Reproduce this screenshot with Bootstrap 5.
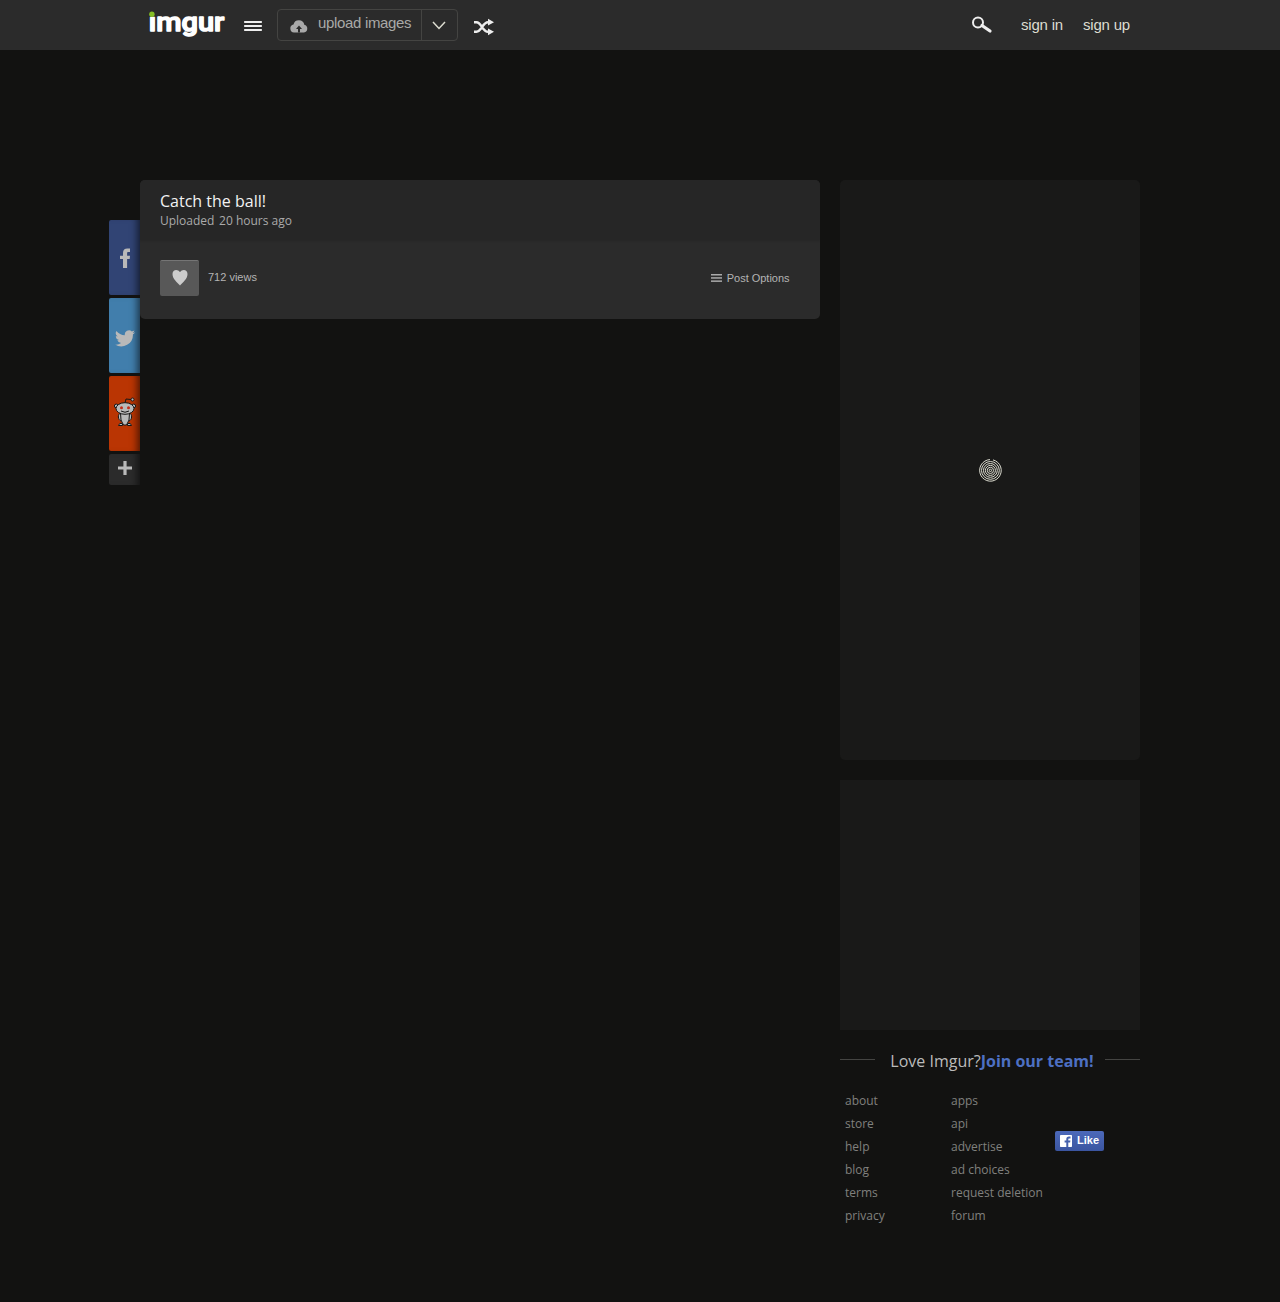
<!DOCTYPE html>
<html lang="en">
<head>
<meta charset="utf-8">
<meta name="viewport" content="width=device-width, initial-scale=1">
<title>Catch the ball! - Imgur</title>
<link href="https://cdn.jsdelivr.net/npm/bootstrap@5.3.0/dist/css/bootstrap.min.css" rel="stylesheet">
<style>
body{background:#121211;font-family:"Open Sans",sans-serif;color:#bbb;min-height:1302px;line-height:1.2}
a{text-decoration:none}
svg{display:block;flex:none}
.arial{font-family:"Liberation Sans",Arial,sans-serif}
.topbar{height:50px;background:#2b2b2b}
.wrap{width:1000px}
.brand-logo{margin:6px 0 0 6px}
.menu-ico{margin:21px 0 0 12px}
.upload{margin:9px 0 0 15px;width:181px;height:32px;border:1px solid #444442;border-radius:4px;font-size:15px;color:#aaa}
.upload .lbl{width:144px;border-right:1px solid #444442;padding:4px 0 0 12px}
.upload .cloud{margin-top:6px}
.upload .txt{margin-left:10px;line-height:17px;color:#a9a9a7;letter-spacing:-.33px}
.upload .chev{margin:11px 0 0 10px}
.shuffle{margin:18px 0 0 15px}
.search-ico{margin:16px 28px 0 0}
.account{font-size:15px;line-height:17px;color:#ddddd1;margin-top:16px;letter-spacing:-.2px}
.account.last{margin:16px 10px 0 20px}
.page-row{margin:130px 0 0 109px}
.share{width:31px;padding-top:40px;gap:3px}
.share a{height:75px;border-radius:2px 0 0 2px;box-shadow:inset -8px 0 7px -5px rgba(0,0,0,.55)}
.fb{background:#314474}.tw{background:#417eac}.rd{background:#ba3503}
.fb svg{margin-left:1px}
.tw svg{margin-top:2px}
.rd svg{margin:0 0 4px 0}
.share .more{height:31px;background:#2b2b2b}
.more svg{margin-bottom:3px}
.post{width:680px;height:139px;background:#2b2b2b;border-radius:5px;overflow:hidden}
.post-head{height:60px;background:#262626;padding:10px 20px 0;box-shadow:0 1px 2px rgba(0,0,0,.12)}
.post-head h1{font-size:16px;line-height:22px;color:#f2f2f2;font-weight:400}
.post-head p{font-size:12px;line-height:18px;color:#aaa}
.post-head .when{margin-left:1.5px}
.post-foot{padding:20px 30px 0 20px;font-size:11px;color:#b4b4b4}
.views{margin-left:9px}
.opts svg{margin-right:5px}
.opts span{margin-top:2px;margin-right:.5px;letter-spacing:-.02px}
.heart{width:39px;height:36px;background:#585858;border-top:1px solid #757575;border-radius:2px}
.heart svg{margin:0 0 2px 0}
.side{width:300px;margin-left:20px}
.panel-a{height:580px;background:#191918;border-radius:5px}
.panel-b{height:250px;margin-top:20px;background:#191918}
.join{height:22px;margin-top:20px;font-size:16px;line-height:22px}
.join hr{width:35px;margin:9px 0 0;border-color:#444442;opacity:1}
.join .jt{padding-left:4px}
.join b{color:#4d70c3}
.links{padding:21px 0 0 5px;font-size:12px;line-height:16px}
.links a{color:#80807e;margin-bottom:7px}
.links .first{width:106px}.links .second{width:104px}
.like{width:49px;height:20px;margin-top:38px;border-radius:2px;background:linear-gradient(#4c69ba,#3b55a0);font-size:11px;font-weight:700;color:#fff;padding-left:5px}
.like span{margin:0 0 2px 5px}
</style>
</head>
<body>
<header class="topbar">
 <div class="wrap mx-auto d-flex align-items-start">
  <a href="#" class="brand-logo"><svg width="86" height="40" viewBox="0 0 86 40"><text x="2.800" y="25.400" textLength="75.500" lengthAdjust="spacingAndGlyphs" font-family="Roboto" font-weight="500" font-size="26" fill="#fff" stroke="#fff" stroke-width="1.400" stroke-linejoin="round">imgur</text><path fill="#2b2b2b" d="M1 1H10V10.600H1z"/><circle cx="5.900" cy="8.300" r="2.700" fill="#85bf25"/></svg></a>
  <svg class="menu-ico" width="18" height="10" fill="#eee"><rect width="18" height="2" rx=".7"/><rect y="4" width="18" height="2" rx=".7"/><rect y="8" width="18" height="2" rx=".7"/></svg>
  <div class="upload arial d-flex align-items-start">
   <div class="lbl d-flex align-items-start h-100"><svg class="cloud" width="18" height="13" viewBox="0 0 18 13"><path fill="#a9a9a9" d="M4 12.500A4 4 0 0 1 3.500 4.600 5.500 5.500 0 0 1 14.300 4.700 4 4 0 0 1 14 12.500z"/><path fill="#2b2b2b" d="M9 5.500 12 9H10V12.600H8V9H6z"/></svg><span class="txt">upload images</span></div>
   <svg class="chev" width="14" height="9" fill="none" stroke="#ddddd1" stroke-width="1.500"><path d="M1 1 7 7.500 13 1"/></svg>
  </div>
  <svg class="shuffle" width="22" height="18" viewBox="0 0 22 18"><path d="M1 4.200H3.500C8.500 4.200 9.500 13.800 15 13.800H16M1 13.800H3.500C8.500 13.800 9.500 4.200 15 4.200H16" fill="none" stroke="#eee" stroke-width="2.500"/><path fill="#eee" d="M15 .8 21 4.200 15 7.600zM15 10.400 21 13.800 15 17.200z"/></svg>
  <div class="ms-auto d-flex arial">
   <svg class="search-ico" width="22" height="18" fill="none" stroke="#eee"><circle cx="7" cy="6.500" r="5" stroke-width="2"/><path d="M11 9.500 19 15" stroke-width="3.200" stroke-linecap="round"/></svg>
   <a class="account" href="#">sign in</a><a class="account last" href="#">sign up</a>
  </div>
 </div>
</header>
<main class="page-row d-flex align-items-start">
 <nav class="share d-flex flex-column">
  <a class="fb d-flex align-items-center justify-content-center" href="#"><svg width="11" height="20" viewBox="0 0 11 20"><path fill="#b9b9b9" d="M3 20V11H0V7.800H3V5C3 2 4.600.6 7.400.6H10V4H8.600C7.400 4 7.100 4.400 7.100 5.400V7.800H10L9.700 11H7.100V20z"/></svg></a>
  <a class="tw d-flex align-items-center justify-content-center pt-1" href="#"><svg width="20" height="17" viewBox="0 0 24 20"><path fill="#b9b9b9" d="M24 2.400a10 10 0 0 1-2.800.8A5 5 0 0 0 23.300.4a10 10 0 0 1-3.100 1.200A5 5 0 0 0 11.800 6.100 14 14 0 0 1 1.700.9 5 5 0 0 0 3.200 7.500a5 5 0 0 1-2.200-.6 5 5 0 0 0 3.900 4.900 5 5 0 0 1-2.200.1 5 5 0 0 0 4.600 3.400A10 10 0 0 1 0 17.300 14 14 0 0 0 21.500 4.900 10 10 0 0 0 24 2.400z"/></svg></a>
  <a class="rd d-flex align-items-center justify-content-center" href="#"><svg width="22" height="30" viewBox="0 0 22 30" fill="#b9b9b9" stroke="#161616"><path d="M11 6 12 2 17 2.500" fill="none"/><circle cx="18.500" cy="2.500" r="1.500"/><circle cx="2.300" cy="9" r="1.900"/><circle cx="19.700" cy="9" r="1.900"/><path d="M7 16C3 17 4 23 7 24M15 16C19 17 18 23 15 24M4.500 28.500Q5 25.500 8.500 26.500V28.500zM17.500 28.500Q17 25.500 13.500 26.500V28.500z"/><path d="M6.500 16H15.500Q16 24 12.500 28H9.500Q6 24 6.500 16z"/><ellipse cx="11" cy="11.500" rx="9" ry="5.800"/><g stroke="none" fill="#c42c18"><circle cx="7.500" cy="10.700" r="1.500"/><circle cx="14.500" cy="10.700" r="1.500"/></g><path d="M7 14Q11 16.500 15 14" fill="none"/></svg></a>
  <a class="more d-flex align-items-center justify-content-center" href="#"><svg width="14" height="14" fill="none" stroke="#b9b9b9" stroke-width="3.200"><path d="M7 0V14M0 7H14"/></svg></a>
 </nav>
 <article class="post">
  <div class="post-head"><h1 class="m-0">Catch the ball!</h1><p class="m-0">Uploaded <span class="when">20 hours ago</span></p></div>
  <div class="post-foot arial d-flex align-items-center">
   <a class="heart d-flex align-items-center justify-content-center" href="#"><svg width="16" height="17" viewBox="0 0 16 17"><path fill="#ccc" d="M8 16.500C5 13 .5 10 .5 5 .5.2 6 0 8 3.200 10 0 15.500.2 15.500 5 15.500 10 11 13 8 16.500z"/></svg></a>
   <span class="views">712 views</span>
   <a href="#" class="opts ms-auto d-flex align-items-center text-reset"><svg width="11" height="8" fill="#aaa"><rect width="11" height="1.500"/><rect y="3.200" width="11" height="1.500"/><rect y="6.400" width="11" height="1.500"/></svg><span>Post Options</span></a>
  </div>
 </article>
 <aside class="side">
  <div class="panel-a d-flex align-items-center justify-content-center"><svg width="24" height="24" viewBox="0 0 24 24" fill="none" stroke="#ddddd1"><circle cx="12.400" cy="12.400" r="1.200"/><circle cx="12.400" cy="12.400" r="3.100"/><circle cx="12.400" cy="12.400" r="5"/><circle cx="12.400" cy="12.400" r="6.900"/><circle cx="12.400" cy="12.400" r="8.900"/><path d="M15 1.900A10.800 10.800 0 1 1 12 1.600"/></svg></div>
  <div class="panel-b"></div>
  <div class="join d-flex justify-content-between"><hr><span class="jt">Love Imgur?<b>Join our team!</b></span><hr></div>
  <div class="links d-flex align-items-start">
   <div class="first d-flex flex-column"><a href="#">about</a><a href="#">store</a><a href="#">help</a><a href="#">blog</a><a href="#">terms</a><a href="#">privacy</a></div>
   <div class="second d-flex flex-column"><a href="#">apps</a><a href="#">api</a><a href="#">advertise</a><a href="#">ad choices</a><a href="#">request deletion</a><a href="#">forum</a></div>
   <div class="like arial d-flex align-items-center"><svg width="12" height="12"><rect width="12" height="12" rx=".7" fill="#fff"/><path fill="#4561ad" d="M6.300 12V7.500H4.600V5.600H6.300V4.300C6.300 2.500 7.300 1.600 9 1.600H10.500V3.400H9.400C8.500 3.400 8.300 3.800 8.300 4.400V5.600H10.400L10.100 7.500H8.300V12z"/></svg><span>Like</span></div>
  </div>
 </aside>
</main>
<script src="https://cdn.jsdelivr.net/npm/bootstrap@5.3.0/dist/js/bootstrap.bundle.min.js"></script>
</body>
</html>
